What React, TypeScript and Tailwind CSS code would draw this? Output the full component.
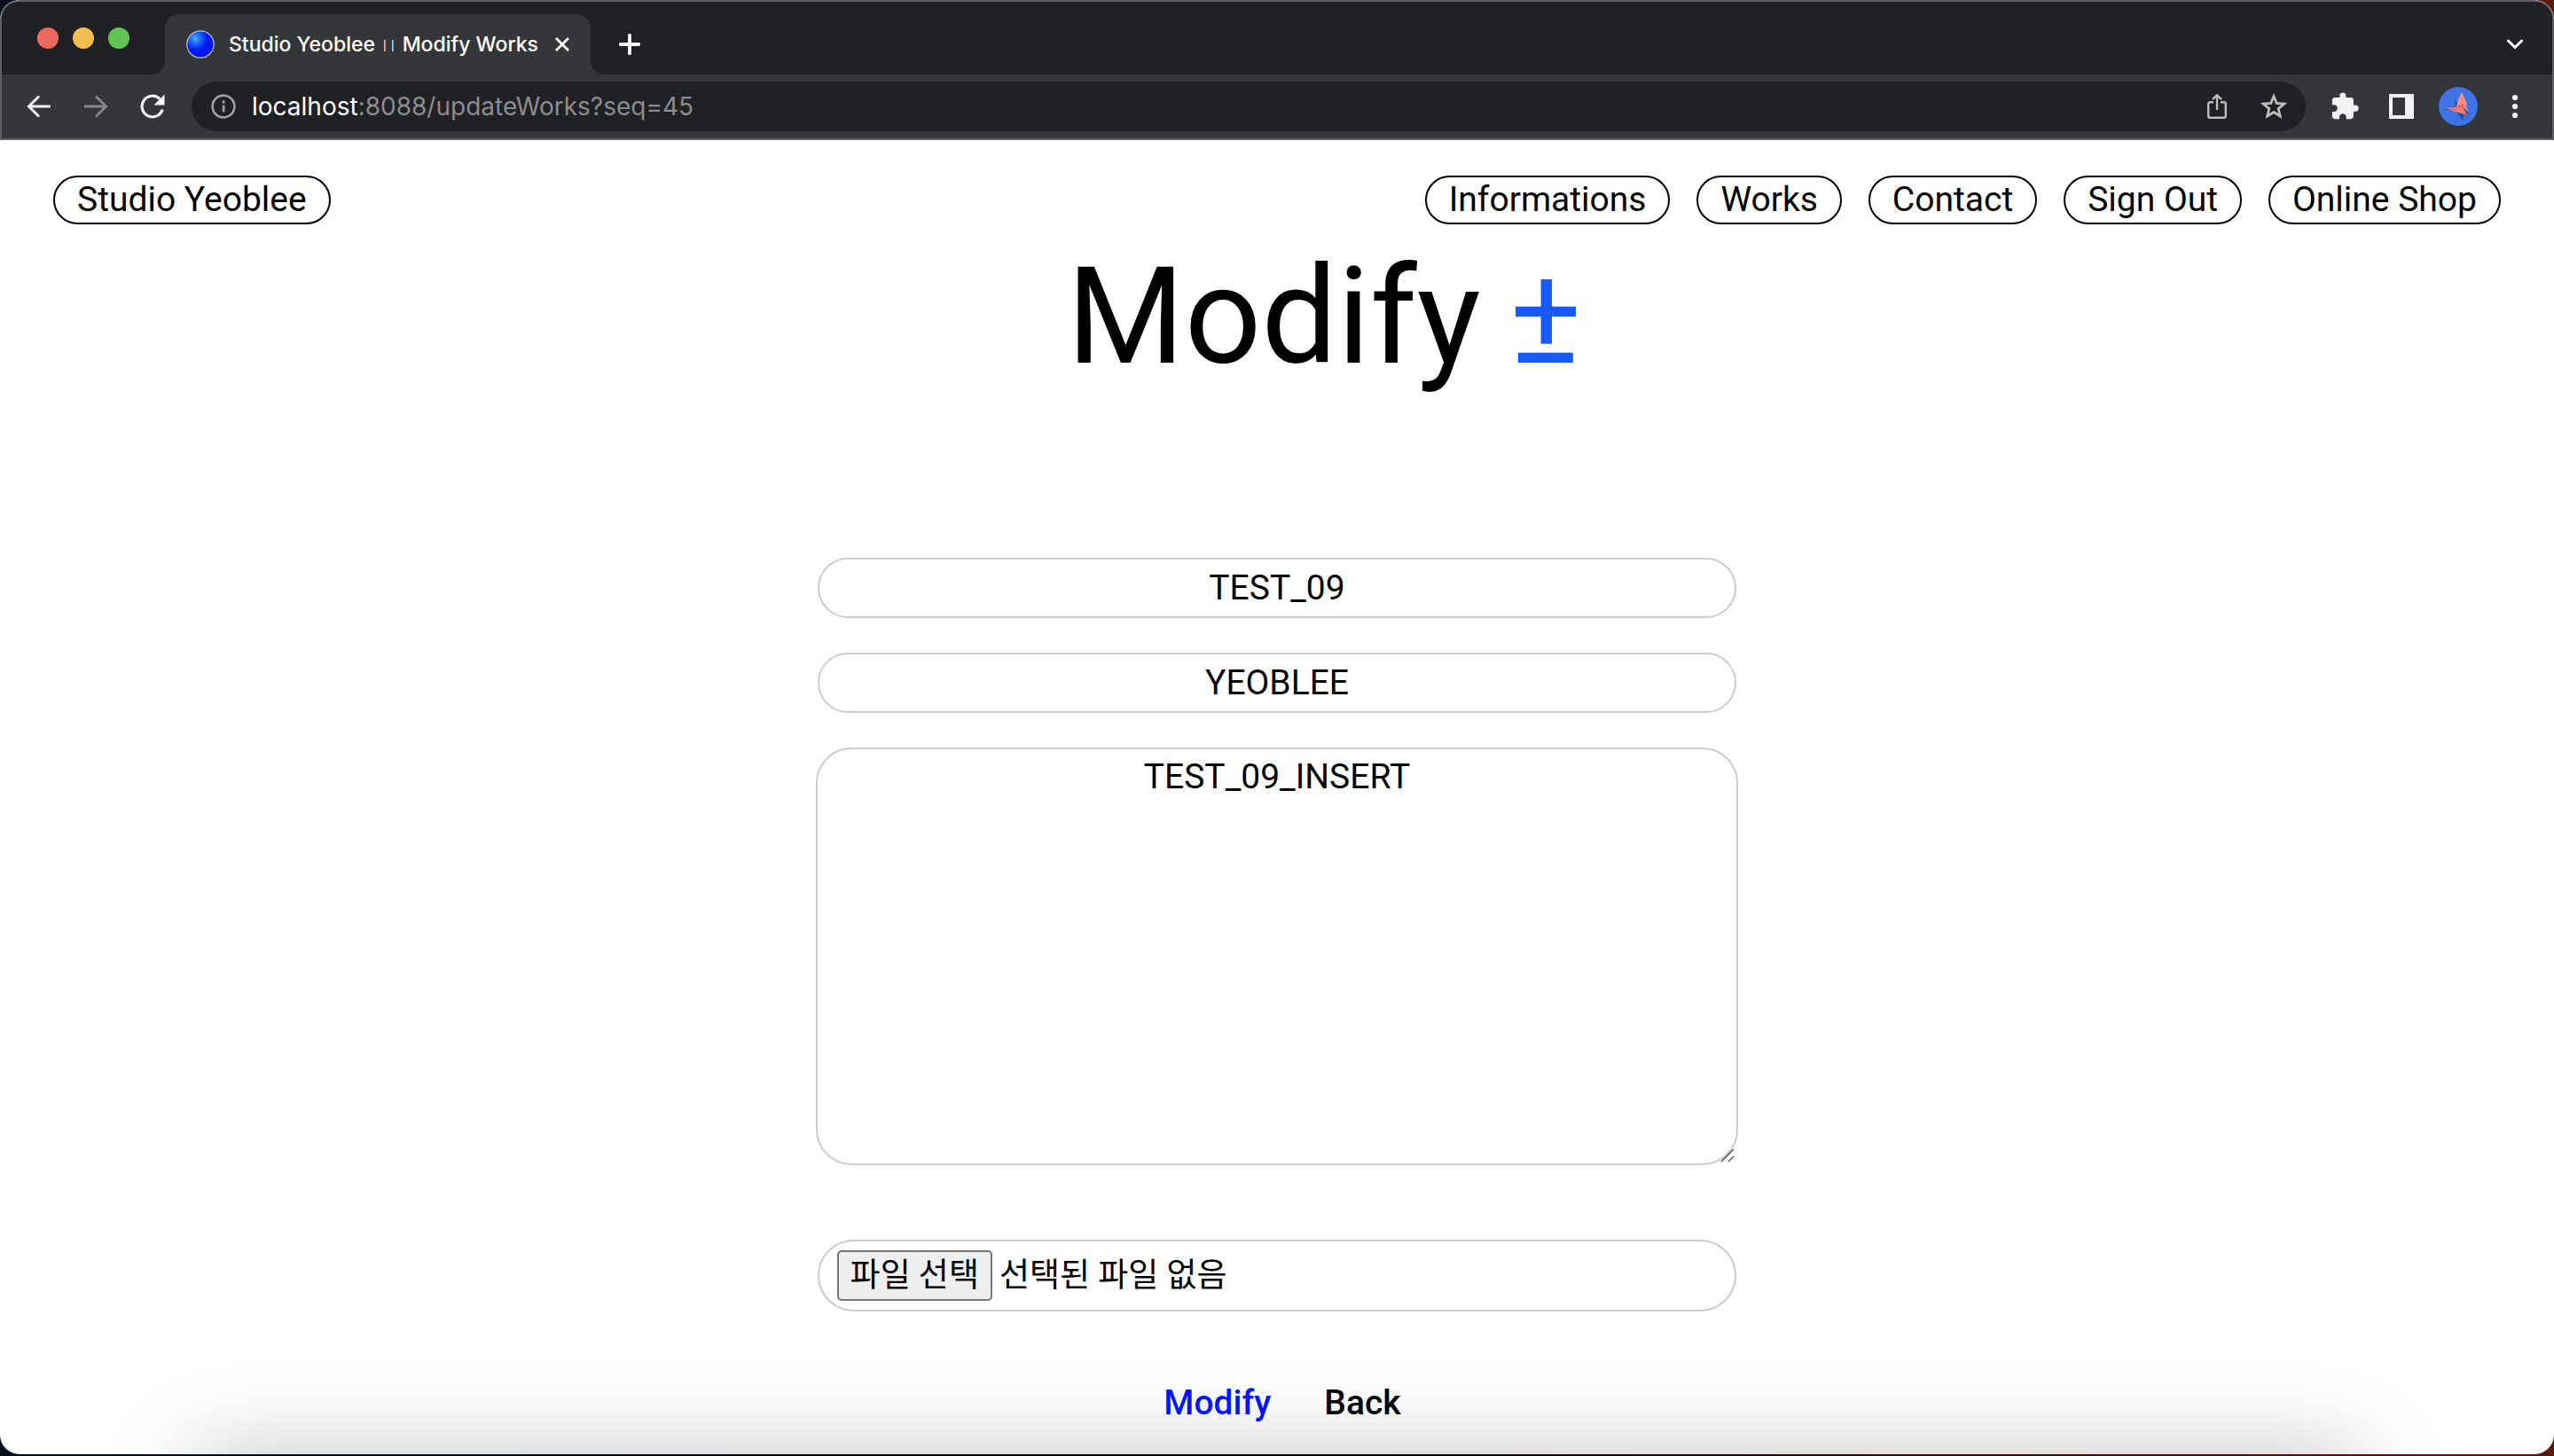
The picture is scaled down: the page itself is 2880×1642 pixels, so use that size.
import type { ReactNode } from "react";

const PILL =
  "rounded-full border-2 border-black bg-white px-[25px] py-[2px] text-[39px] leading-[47px] whitespace-nowrap text-black";

const FIELD = "rounded-full border-2 border-[#cccccc] bg-white text-center text-[39px] leading-[47px] text-black";

const NAV = ["Informations", "Works", "Contact", "Sign Out", "Online Shop"];

function IconButton({ label, children }: { label: string; children: ReactNode }) {
  return (
    <button type="button" aria-label={label} className="flex h-16 w-16 shrink-0 items-center justify-center">
      {children}
    </button>
  );
}

function TabStrip() {
  return (
    <div className="flex h-[82px] items-end bg-[#202124] pl-10 font-[Inter,sans-serif]">
      <div className="mb-[29px] flex gap-4">
        <span className="h-6 w-6 rounded-full bg-[#ed6a5e]" />
        <span className="h-6 w-6 rounded-full bg-[#f5bf4f]" />
        <span className="h-6 w-6 rounded-full bg-[#61c554]" />
      </div>
      <svg className="ml-6 h-4 w-4" viewBox="0 0 16 16" aria-hidden="true">
        <path d="M16 0v16H0C9 16 16 9 16 0z" fill="#35363a" />
      </svg>
      <div className="flex h-[68px] w-[480px] items-center rounded-t-2xl bg-[#35363a] pl-6 text-white">
        <svg className="h-8 w-8 shrink-0" viewBox="0 0 32 32" aria-hidden="true">
          <defs>
            <radialGradient id="orb" cx="0.32" cy="0.28" r="0.45">
              <stop offset="0" stopColor="#4db2ff" />
              <stop offset="0.5" stopColor="#1a5cfb" />
              <stop offset="1" stopColor="#0018f5" />
            </radialGradient>
          </defs>
          <circle cx="16" cy="16" r="15.2" fill="url(#orb)" stroke="#b9bcc6" strokeWidth="1.2" />
        </svg>
        <span className="ml-4 text-[23px] leading-8 font-medium whitespace-nowrap">
          Studio Yeoblee{" "}
          <span className="inline-flex gap-1 px-[2px] font-extralight">
            <span>ı</span>
            <span>ı</span>
          </span>{" "}
          Modify Works
        </span>
        <button type="button" aria-label="Close tab" className="mr-4 ml-auto flex h-8 w-8 items-center justify-center">
          <svg className="h-4 w-4" viewBox="0 0 16 16" aria-hidden="true">
            <path d="M1 1l14 14M15 1L1 15" stroke="#fff" strokeWidth="2.8" />
          </svg>
        </button>
      </div>
      <svg className="h-4 w-4" viewBox="0 0 16 16" aria-hidden="true">
        <path d="M0 0v16h16C7 16 0 9 0 0z" fill="#35363a" />
      </svg>
      <button type="button" aria-label="New tab" className="mb-[18px] ml-3 flex h-8 w-8 items-center justify-center">
        <svg className="h-6 w-6" viewBox="0 0 24 24" aria-hidden="true">
          <path d="M12 1.8v20.4M1.8 12h20.4" stroke="#fff" strokeWidth="3.8" strokeLinecap="round" />
        </svg>
      </button>
      <button
        type="button"
        aria-label="Search tabs"
        className="mr-[26px] mb-[18px] ml-auto flex h-8 w-8 items-center justify-center"
      >
        <svg className="h-[18px] w-[18px]" viewBox="0 0 18 18" aria-hidden="true">
          <path d="M1.5 5L9 12.5 16.5 5" fill="none" stroke="#fff" strokeWidth="3" strokeLinecap="round" />
        </svg>
      </button>
    </div>
  );
}

function Toolbar() {
  return (
    <div className="flex h-[74px] items-center border-b-2 border-[#5f6063] bg-[#35363a] pr-[10px] pl-[10px]">
      <IconButton label="Back">
        <svg className="h-7 w-7" viewBox="0 0 28 28" fill="none" stroke="#f1f3f4" strokeWidth="3" aria-hidden="true">
          <path d="M27 14H3M14 2.5L2.5 14 14 25.5" />
        </svg>
      </IconButton>
      <IconButton label="Forward">
        <svg className="h-7 w-7" viewBox="0 0 28 28" fill="none" stroke="#86878a" strokeWidth="3" aria-hidden="true">
          <path d="M1 14h24M14 2.5L25.5 14 14 25.5" />
        </svg>
      </IconButton>
      <IconButton label="Reload">
        <svg className="h-7 w-7" viewBox="0 0 28 28" aria-hidden="true">
          <path d="M25.2 17.5A11.8 11.8 0 1 1 22.2 5.6" fill="none" stroke="#f1f3f4" strokeWidth="3.2" />
          <path d="M27.5 0.5v12H15.5z" fill="#f1f3f4" />
        </svg>
      </IconButton>
      <div className="ml-3 flex h-14 flex-1 items-center rounded-full bg-[#202124] pl-[22px]">
        <svg className="h-7 w-7 shrink-0" viewBox="0 0 28 28" aria-hidden="true">
          <circle cx="14" cy="14" r="12.4" fill="none" stroke="#9aa0a6" strokeWidth="2.6" />
          <path d="M12.7 12.5h2.8v7.8h-2.8zM12.7 7.6h2.8v2.8h-2.8z" fill="#9aa0a6" />
        </svg>
        <div className="ml-[18px] flex-1 font-[Inter,sans-serif] text-[28px] leading-8 whitespace-nowrap text-[#8b8c8f]">
          <span className="text-white">localhost</span>:8088/updateWorks?seq=45
        </div>
        <IconButton label="Share">
          <svg className="h-7 w-[22px]" viewBox="0 0 22 28" fill="none" stroke="#bdbdbd" strokeWidth="2.4" aria-hidden="true">
            <path d="M7 9.2H3.2a2 2 0 0 0-2 2V24.8a2 2 0 0 0 2 2h15.6a2 2 0 0 0 2-2V11.2a2 2 0 0 0-2-2H15M11 18V1.5M6 6.2l5-5 5 5" />
          </svg>
        </IconButton>
        <IconButton label="Bookmark this page">
          <svg className="h-[30px] w-[30px]" viewBox="0 0 30 30" fill="none" stroke="#bdbdbd" strokeWidth="2.8" aria-hidden="true">
            <path d="M15 3.5l3.2 7.9 8.5.7-6.5 5.5 2 8.4-7.2-4.5-7.2 4.500 2-8.4L3.3 12.1l8.5-.7z" />
          </svg>
        </IconButton>
        <span className="w-1" />
      </div>
      <div className="ml-3 flex">
        <IconButton label="Extensions">
          <svg className="h-[34px] w-[34px]" viewBox="0 0 24 24" aria-hidden="true">
            <path
              fill="#f1f3f4"
              d="M20.5 11H19V7c0-1.1-.9-2-2-2h-4V3.5a2.5 2.5 0 0 0-5 0V5H4c-1.1 0-1.990.9-1.990 2v3.8H3.5c1.490 0 2.7 1.210 2.7 2.7s-1.210 2.7-2.7 2.7H2V20c0 1.1.9 2 2 2h3.8v-1.5c0-1.490 1.210-2.7 2.7-2.7s2.7 1.210 2.7 2.7V22H17c1.1 0 2-.9 2-2v-4h1.5a2.5 2.5 0 0 0 0-5z"
            />
          </svg>
        </IconButton>
        <IconButton label="Side panel">
          <span className="h-7 w-7 border-4 border-r-[10px] border-[#f1f3f4]" />
        </IconButton>
        <IconButton label="Profile">
          <svg className="h-11 w-11" viewBox="0 0 44 44" aria-hidden="true">
            <circle cx="22" cy="22" r="22" fill="#3f73e3" />
            <path d="M5 26.5l12-2 10 13 2-7 6 0-10-10-7-6 1 7z" fill="#2b4fae" />
            <path d="M26 6l6 13-1 4 4 6.5-7-6.5-8-1c1-6 3-11 6-16z" fill="#f28f84" />
            <path d="M8.5 24l12-1.5 7 .5 4 8.5-12-3z" fill="#ee7a6e" />
            <path d="M20 22.5l8-4 1 5.5z" fill="#e4625b" />
          </svg>
        </IconButton>
        <IconButton label="Menu">
          <svg className="h-7 w-7" viewBox="0 0 28 28" fill="#f1f3f4" aria-hidden="true">
            <circle cx="14" cy="4" r="3.1" />
            <circle cx="14" cy="14" r="3.1" />
            <circle cx="14" cy="24" r="3.1" />
          </svg>
        </IconButton>
      </div>
    </div>
  );
}

export default function App() {
  return (
    <div className="min-h-screen bg-linear-to-r from-[#03101f] via-[#050308] to-[#5a1a12] font-[Roboto,'Noto_Sans_CJK_KR',sans-serif]">
      <div className="relative flex min-h-[calc(100vh-2px)] flex-col overflow-hidden rounded-[22px] bg-white">
        <header className="overflow-hidden rounded-t-[22px] border-x-2 border-t-2 border-[#5f6063] bg-[#202124]">
          <TabStrip />
          <Toolbar />
        </header>

        <nav className="flex items-center justify-between px-[60px] pt-10" aria-label="Main">
          <a href="#home" className={PILL}>
            Studio Yeoblee
          </a>
          <div className="flex gap-[30px]">
            {NAV.map((item) => (
              <a key={item} href="#nav" className={PILL}>
                {item}
              </a>
            ))}
          </div>
        </nav>

        <main className="flex flex-col items-center">
          <h1 className="mt-[14px] flex gap-8 pl-[106px] text-[152px] leading-[180px]">
            Modify <span className="text-[#1859f7]">±</span>
          </h1>

          <form className="mt-[182px] flex w-[36%] flex-col items-center" onSubmit={(e) => e.preventDefault()}>
            <input aria-label="Title" defaultValue="TEST_09" className={`${FIELD} h-[68px] w-full`} />
            <input aria-label="Writer" defaultValue="YEOBLEE" className={`${FIELD} mt-[39px] h-[68px] w-full`} />
            <div className="relative mt-[39px] w-[calc(100%+4px)]">
              <textarea
                aria-label="Content"
                defaultValue="TEST_09_INSERT"
                className="block h-[471px] w-full resize-none rounded-[40px] border-2 border-[#cccccc] bg-white py-2 text-center text-[39px] leading-[47px] text-black"
              />
              <svg
                className="absolute right-1 bottom-[3px] h-4 w-4"
                viewBox="0 0 16 16"
                stroke="#555"
                strokeWidth="1.5"
                aria-hidden="true"
              >
                <path d="M1 15L15 1M9 15l6-6" />
              </svg>
            </div>
            <div className="mt-[84px] flex h-[81px] w-full items-center rounded-full border-2 border-[#cccccc] bg-white pl-5 text-[37px] leading-[47px] text-black">
              <input id="upload" type="file" className="sr-only" />
              <label htmlFor="upload" className="rounded-[5px] border-2 border-[#767676] bg-[#efefef] px-[13px] py-[3px]">
                파일 선택
              </label>
              <span className="ml-2">선택된 파일 없음</span>
            </div>
            <div className="mt-20 flex gap-[60px] pl-3 text-[39px] leading-[47px] font-medium">
              <button type="submit" className="text-[#0019ff]">
                Modify
              </button>
              <button type="button" className="text-black">
                Back
              </button>
            </div>
          </form>
        </main>

        <div
          className="pointer-events-none absolute inset-x-[218px] top-full h-20 shadow-[0_0_100px_rgba(0,0,0,0.25)]"
          aria-hidden="true"
        />
      </div>
    </div>
  );
}
